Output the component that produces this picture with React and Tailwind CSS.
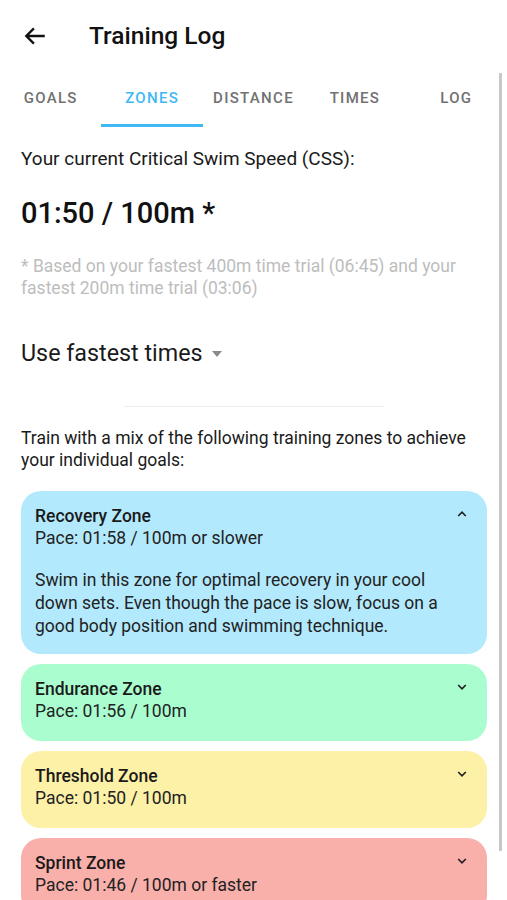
import { useState } from 'react';

const tabs = ['GOALS', 'ZONES', 'DISTANCE', 'TIMES', 'LOG'];

const zones = [
  {
    name: 'Recovery Zone',
    pace: 'Pace: 01:58 / 100m or slower',
    bg: 'bg-[#b3e9fd]',
    text: 'Swim in this zone for optimal recovery in your cool down sets. Even though the pace is slow, focus on a good body position and swimming technique.',
  },
  { name: 'Endurance Zone', pace: 'Pace: 01:56 / 100m', bg: 'bg-[#aafdcf]' },
  { name: 'Threshold Zone', pace: 'Pace: 01:50 / 100m', bg: 'bg-[#fdf0a7]' },
  { name: 'Sprint Zone', pace: 'Pace: 01:46 / 100m or faster', bg: 'bg-[#f9b0ab]' },
];

function Chevron({ up }) {
  return (
    <svg width="14" height="14" viewBox="0 0 24 24" className="text-[#1f1f1f]">
      <path
        d={up ? 'M5.5 15.5l6.5-6.5 6.5 6.5' : 'M5.5 8.5l6.5 6.5 6.5-6.5'}
        fill="none"
        stroke="currentColor"
        strokeWidth="2.8"
      />
    </svg>
  );
}

function ZoneCard({ zone, open }) {
  return (
    <div className={`${zone.bg} rounded-[20px] pl-[14px] pr-[17px] pt-[14px] ${open ? 'pb-[16px]' : 'pb-[19px]'}`}>
      <div className="flex justify-between">
        <div>
          <div className="text-[17.5px] leading-[22px] font-medium text-[#1a1a1a]">{zone.name}</div>
          <div className="text-[17.5px] leading-[22px] text-[#222]">{zone.pace}</div>
        </div>
        <div className="pt-[2px] pr-[1px]">
          <Chevron up={open} />
        </div>
      </div>
      {open && (
        <p className="mt-[20px] text-[17.5px] leading-[23px] text-[#222] pr-[26px]">{zone.text}</p>
      )}
    </div>
  );
}

export default function App() {
  const [active, setActive] = useState(1);

  return (
    <div className="w-[507px] h-[900px] overflow-hidden bg-white relative" style={{ fontFamily: 'Roboto, "Noto Sans", sans-serif' }}>
      {/* header */}
      <div className="h-[72px] flex items-center">
        <svg width="26" height="26" viewBox="0 0 24 24" className="ml-[22px]">
          <path d="M21 12H4M11 5l-7 7 7 7" fill="none" stroke="#111" strokeWidth="2.2" />
        </svg>
        <h1 className="ml-[41px] text-[24.5px] font-medium text-[#111]">Training Log</h1>
      </div>

      {/* tabs */}
      <div className="flex">
        {tabs.map((t, i) => (
          <button
            key={t}
            onClick={() => setActive(i)}
            className={`relative flex-1 h-[56px] pb-[4px] flex items-center justify-center text-[15px] font-medium tracking-[1.3px] ${
              i === active ? 'text-[#3fb8f4]' : 'text-[#717171]'
            }`}
          >
            {t}
            {i === active && <span className="absolute left-0 right-0 bottom-[1px] h-[3px] bg-[#3fb8f4]" />}
          </button>
        ))}
      </div>

      {/* scrollbar */}
      <div className="absolute right-[5px] top-[73px] w-[3px] h-[778px] bg-[#c8c8c8]" />

      <div className="px-[21px] pr-[20px]">
        <p className="mt-[19px] text-[19px] leading-[24px] text-[#1a1a1a]">Your current Critical Swim Speed (CSS):</p>
        <p className="mt-[25px] text-[29px] leading-[34px] font-medium text-[#111]">01:50 / 100m *</p>
        <p className="mt-[25px] text-[17.5px] leading-[22px] text-[#bdbdbd] pr-[20px]">
          * Based on your fastest 400m time trial (06:45) and your fastest 200m time trial (03:06)
        </p>

        <div className="mt-[40px] flex items-center h-[28px]">
          <span className="text-[23.3px] text-[#1a1a1a]">Use fastest times</span>
          <svg width="12" height="8" viewBox="0 0 12 8" className="ml-[8px] mt-[2px]">
            <path d="M1 1h10L6 7z" fill="#8a8a8a" />
          </svg>
        </div>

        <div className="mt-[39px] mx-auto w-[260px] h-[1px] bg-[#ececec]" />

        <p className="mt-[20px] text-[17.5px] leading-[22px] text-[#1a1a1a]">
          Train with a mix of the following training zones to achieve your individual goals:
        </p>

        <div className="mt-[20px] flex flex-col gap-[10px]">
          {zones.map((z, i) => (
            <ZoneCard key={z.name} zone={z} open={i === 0} />
          ))}
        </div>
      </div>
    </div>
  );
}
